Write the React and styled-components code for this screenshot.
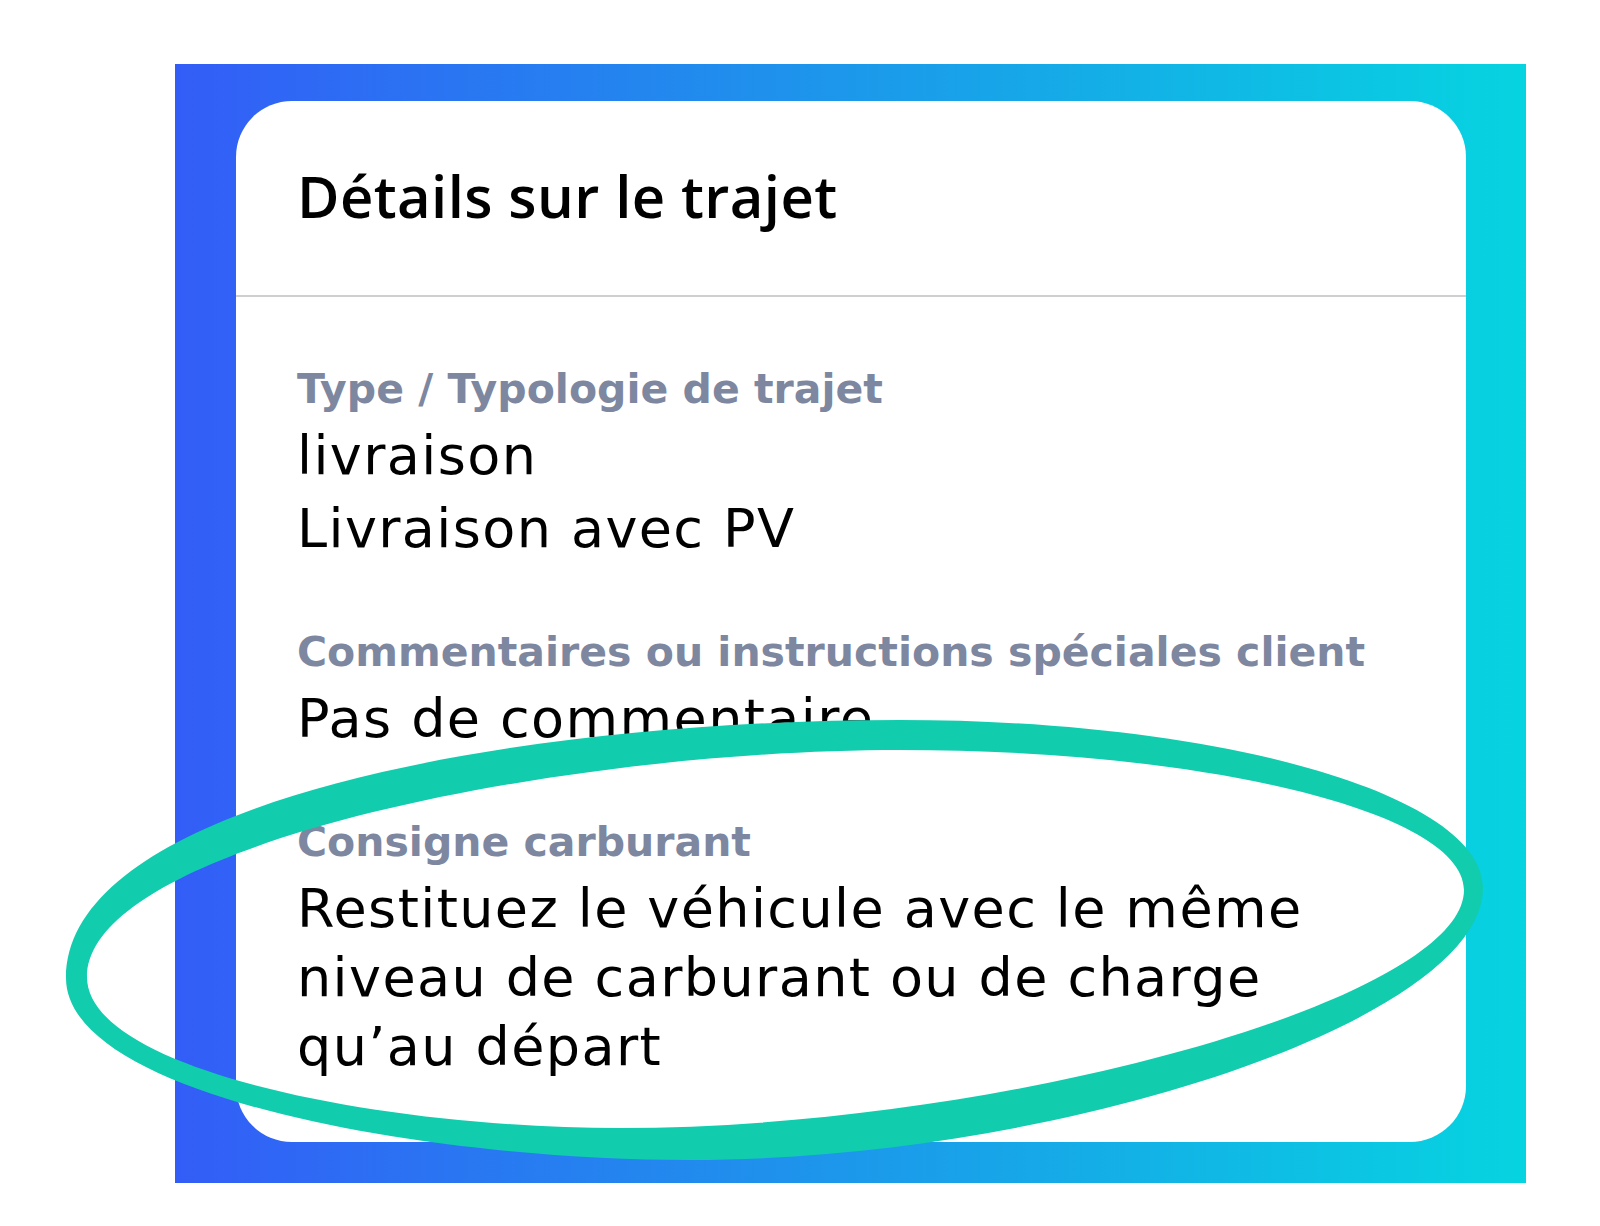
import React from "react";
import styled, { createGlobalStyle } from "styled-components";

const GlobalStyle = createGlobalStyle`
  html, body {
    margin: 0;
    padding: 0;
    background: #ffffff;
  }
  body {
    overflow: hidden;
  }
  * {
    box-sizing: border-box;
  }
`;

const Page = styled.div`
  position: relative;
  width: 1600px;
  height: 1226px;
  padding: 64px 0 0 175px;
  background: #ffffff;
`;

const Panel = styled.section`
  width: 1351px;
  height: 1119px;
  padding: 37px 60px 41px 61px;
  background: linear-gradient(90deg, #335df7 0%, #1c98eb 50%, #06d4e0 100%);
  display: flex;
`;

const Card = styled.article`
  flex: 1;
  background: #ffffff;
  border-radius: 56px;
  display: flex;
  flex-direction: column;
  overflow: hidden;
`;

const Header = styled.header`
  padding: 60px 61px 64px;
  border-bottom: 2px solid #cfcfcf;
`;

const Title = styled.h1`
  margin: 0;
  font-family: "Open Sans", "DejaVu Sans", sans-serif;
  font-weight: 600;
  font-size: 58px;
  line-height: 70px;
  letter-spacing: 0.4px;
  color: #000000;
`;

const Body = styled.div`
  padding: 67px 61px 0;
  display: flex;
  flex-direction: column;
  gap: 64px;
`;

const Field = styled.div`
  display: flex;
  flex-direction: column;
  gap: 7px;
`;

const Label = styled.div`
  font-family: "DejaVu Sans", "Open Sans", sans-serif;
  font-weight: 700;
  font-size: 41px;
  line-height: 50px;
  color: #7d87a0;
`;

const Values = styled.div`
  display: flex;
  flex-direction: column;
  gap: 4px;
`;

const Value = styled.div`
  font-family: "DejaVu Sans", "Open Sans", sans-serif;
  font-weight: 400;
  font-size: 54px;
  line-height: 69px;
  letter-spacing: 1.4px;
  color: #000000;
`;

const Annotation = styled.svg`
  position: absolute;
  top: 0;
  left: 0;
  width: 1600px;
  height: 1226px;
  pointer-events: none;
`;

const outerContour =
  "M66,978 C66,800 520,720 900,720 C1222,720 1483,795 1483,888 " +
  "C1483,1020 1060,1160 690,1160 C420,1160 66,1095 66,978 Z";

const innerContour =
  "M87,977 C87,845 560,750 900,750 C1211,750 1464,813 1464,890 " +
  "C1464,1000 1000,1128 620,1128 C380,1128 87,1070 87,977 Z";

export default function App() {
  return (
    <>
      <GlobalStyle />
      <Page>
        <Panel>
          <Card>
            <Header>
              <Title>Détails sur le trajet</Title>
            </Header>
            <Body>
              <Field>
                <Label>Type / Typologie de trajet</Label>
                <Values>
                  <Value>livraison</Value>
                  <Value>Livraison avec PV</Value>
                </Values>
              </Field>
              <Field>
                <Label>Commentaires ou instructions spéciales client</Label>
                <Value>Pas de commentaire</Value>
              </Field>
              <Field>
                <Label>Consigne carburant</Label>
                <Value>
                  Restituez le véhicule avec le même niveau de carburant ou de
                  charge qu’au départ
                </Value>
              </Field>
            </Body>
          </Card>
        </Panel>
        <Annotation viewBox="0 0 1600 1226" aria-hidden="true">
          <path
            d={`${outerContour} ${innerContour}`}
            fill="#12ccae"
            fillRule="evenodd"
          />
        </Annotation>
      </Page>
    </>
  );
}
